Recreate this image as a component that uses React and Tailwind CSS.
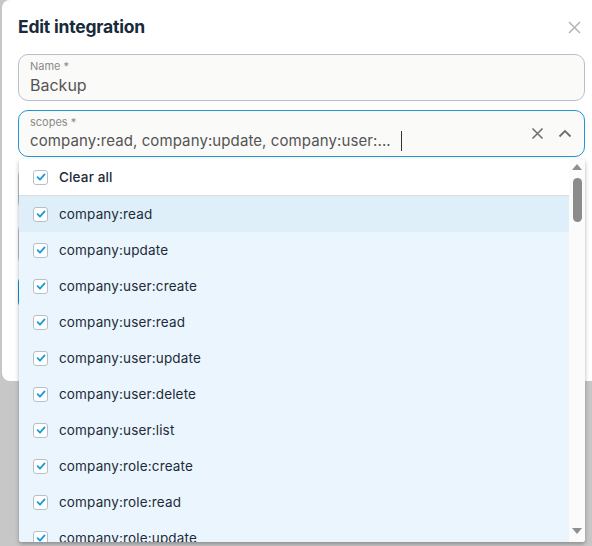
import React from 'react';

const scopes = [
  'company:read',
  'company:update',
  'company:user:create',
  'company:user:read',
  'company:user:update',
  'company:user:delete',
  'company:user:list',
  'company:role:create',
  'company:role:read',
  'company:role:update',
  'company:role:delete',
];

function Check() {
  return (
    <span className="flex h-[15px] w-[15px] shrink-0 items-center justify-center rounded-[3px] border border-[#b7bfc8] bg-white">
      <svg width="10" height="10" viewBox="0 0 10 10" fill="none">
        <path d="M1.6 5.2 L4 7.6 L8.6 2.4" stroke="#1b9ad8" strokeWidth="1.8" strokeLinecap="round" strokeLinejoin="round" />
      </svg>
    </span>
  );
}

function Field({ label, children, active }) {
  return (
    <div
      className={
        'relative h-[47px] rounded-[10px] border bg-[#fafaf9] px-[11px] pt-[4px] ' +
        (active ? 'border-[#2196d3]' : 'border-[#b9c0c9]')
      }
    >
      <div className="text-[11px] leading-[14px] text-[#8a8a8a]">
        {label}
        <span className="ml-[3px]">*</span>
      </div>
      {children}
    </div>
  );
}

export default function App() {
  return (
    <div className="relative h-[546px] w-[592px] overflow-hidden bg-[#c7c7c7] font-['Inter',sans-serif]">
      {/* dialog */}
      <div className="ml-[2px] h-[381px] w-[600px] rounded-[8px] bg-white px-[16px]">
        <div className="flex h-[52px] w-[567px] items-center justify-between pt-[3px]">
          <h1 className="text-[17.5px] font-bold tracking-[-0.2px] text-[#192a3b]">Edit integration</h1>
          <svg width="13" height="13" viewBox="0 0 13 13" className="mr-[4px]">
            <path d="M1 1 L12 12 M12 1 L1 12" stroke="#b2b7be" strokeWidth="1.6" />
          </svg>
        </div>

        <div className="mt-[2px] flex w-[567px] flex-col gap-[9px]">
          <Field label="Name">
            <div className="mt-[2px] text-[16px] leading-[20px] text-[#555]">Backup</div>
          </Field>

          <Field label="scopes" active>
            <div className="mt-[2px] flex items-center text-[15px] leading-[20px] tracking-[0.1px] text-[#545454]">
              <span>company:read, company:update, company:user:...</span>
              <span className="ml-[10px] h-[20px] w-px bg-[#333]" />
            </div>
            <div className="absolute right-[12px] top-[16px] flex items-center gap-[14px]">
              <svg width="13" height="13" viewBox="0 0 13 13">
                <path d="M1.5 1.5 L11.5 11.5 M11.5 1.5 L1.5 11.5" stroke="#6f6f6f" strokeWidth="1.6" />
              </svg>
              <svg width="14" height="9" viewBox="0 0 14 9">
                <path d="M1.5 7.5 L7 2 L12.5 7.5" stroke="#6f6f6f" strokeWidth="1.8" fill="none" />
              </svg>
            </div>
          </Field>

          {/* rest of the form, under the open list */}
          <div className="h-[46px] rounded-[10px] border border-[#b9c0c9]" />
          <div className="h-[46px] rounded-[10px] border border-[#b9c0c9]" />
          <div className="h-[32px] rounded-[6px] border-2 border-[#1b8fcf]" />
          <div className="ml-auto mt-[12px] h-[30px] w-[120px] rounded-[6px] bg-[#1b8fcf]" />
        </div>
      </div>

      {/* scopes list */}
      <div className="absolute left-[19px] top-[159px] flex h-[383px] w-[566px] overflow-hidden rounded-[3px] bg-white shadow-[0_2px_4px_rgba(0,0,0,0.3)]">
        <div className="flex-1 text-[13.5px] tracking-[0.15px] text-[#1d2b3a]">
          <div className="flex h-[37px] items-center gap-[11px] border-b border-[#dcdcdc] bg-white pl-[14px]">
            <Check />
            <span className="font-medium">Clear all</span>
          </div>
          {scopes.map((s, i) => (
            <div
              key={s}
              className={
                'flex h-[36px] items-center gap-[11px] pl-[14px] ' +
                (i === 0 ? 'bg-[#dfeff9]' : 'bg-[#ebf5fd]')
              }
            >
              <Check />
              <span>{s}</span>
            </div>
          ))}
        </div>
        <div className="flex w-[16px] flex-col items-center bg-[#fbfbfb]">
          <svg width="10" height="6" viewBox="0 0 10 6" className="mt-[5px]">
            <path d="M0 6 L5 0 L10 6 Z" fill="#8f8f8f" />
          </svg>
          <div className="mt-[8px] h-[44px] w-[9px] rounded-full bg-[#8b8b8b]" />
          <svg width="10" height="6" viewBox="0 0 10 6" className="mb-[8px] mt-auto">
            <path d="M0 0 L10 0 L5 6 Z" fill="#8f8f8f" />
          </svg>
        </div>
      </div>
    </div>
  );
}
